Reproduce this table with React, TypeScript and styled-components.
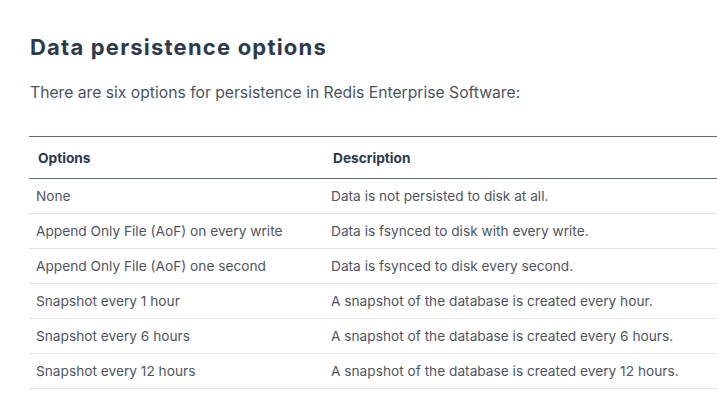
import React from "react";
import styled, { createGlobalStyle } from "styled-components";

const Global = createGlobalStyle`
  html, body { margin: 0; padding: 0; background: #ffffff; }
  body { font-family: Inter, "Noto Sans", sans-serif; }
`;

const Page = styled.div`
  padding: 33px 0 0 29px;
  width: 717px;
  box-sizing: border-box;
`;

const Title = styled.h2`
  margin: 0 0 0 1px;
  font-size: 22px;
  line-height: 28px;
  font-weight: 700;
  color: #2c3a4b;
  letter-spacing: 1.2px;
`;

const Lead = styled.p`
  margin: 21px 0 0 1px;
  font-size: 15.7px;
  line-height: 22px;
  font-weight: 400;
  color: #4a5461;
`;

const Table = styled.table`
  margin-top: 32px;
  width: 688px;
  table-layout: fixed;
  border-collapse: collapse;
  border-top: 1px solid #5d6978;
  font-size: 13.7px;
`;

const HeadCell = styled.th<{ $w?: string }>`
  text-align: left;
  font-weight: 700;
  color: #2c3a4b;
  padding: 1px 8px 0 9px;
  height: 42px;
  border-bottom: 1px solid #5d6978;
  width: ${(p) => p.$w || "auto"};
  box-sizing: border-box;
`;

const Row = styled.tr`
  border-bottom: 1px solid #e3e3e3;
`;

const Cell = styled.td`
  color: #4f5661;
  padding: 0 7px;
  height: 34px;
  font-weight: 400;
  white-space: nowrap;
`;

const rows: [string, string][] = [
  ["None", "Data is not persisted to disk at all."],
  ["Append Only File (AoF) on every write", "Data is fsynced to disk with every write."],
  ["Append Only File (AoF) one second", "Data is fsynced to disk every second."],
  ["Snapshot every 1 hour", "A snapshot of the database is created every hour."],
  ["Snapshot every 6 hours", "A snapshot of the database is created every 6 hours."],
  ["Snapshot every 12 hours", "A snapshot of the database is created every 12 hours."],
];

export default function App() {
  return (
    <>
      <Global />
      <Page>
        <Title>Data persistence options</Title>
        <Lead>There are six options for persistence in Redis Enterprise Software:</Lead>
        <Table>
          <thead>
            <tr>
              <HeadCell $w="295px">Options</HeadCell>
              <HeadCell>Description</HeadCell>
            </tr>
          </thead>
          <tbody>
            {rows.map(([a, b]) => (
              <Row key={a}>
                <Cell>{a}</Cell>
                <Cell>{b}</Cell>
              </Row>
            ))}
          </tbody>
        </Table>
      </Page>
    </>
  );
}
